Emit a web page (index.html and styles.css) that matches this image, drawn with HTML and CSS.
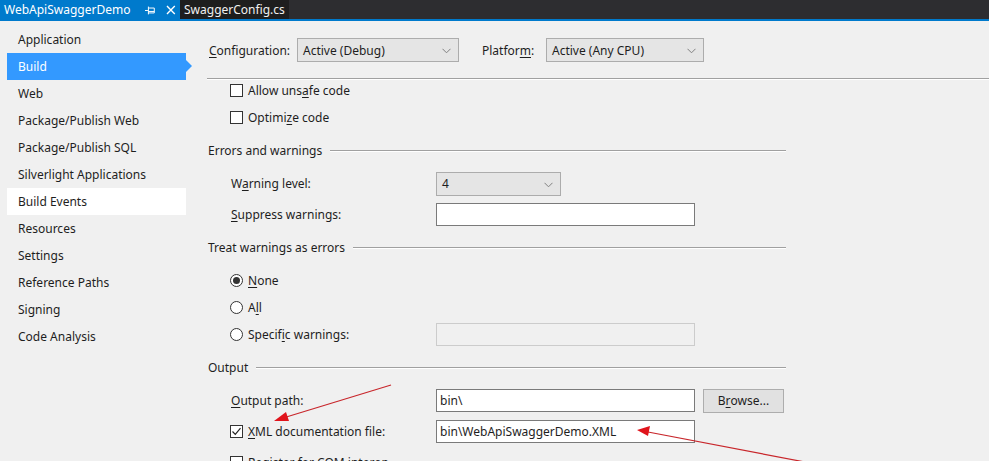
FILE: index.html
```html
<!DOCTYPE html>
<html>
<head>
  <title>WebApiSwaggerDemo - Build</title>
  <meta charset="utf-8">
  <link rel="stylesheet" href="styles.css">
</head>
<body>
  <div class="tabbar">
    <div class="tab active">
      <span>WebApiSwaggerDemo</span>
      <svg class="pin" width="11" height="10" viewBox="0 0 11 10">
        <path d="M0 5.5H3M3.5 1.5V9.5M3.5 3H9.5V8H3.5M3.5 6.5H9.5" fill="none" stroke="#fff" stroke-width="1"/>
      </svg>
      <svg class="close" width="10" height="10" viewBox="0 0 10 10">
        <path d="M1 1L9 9M9 1L1 9" stroke="#fff" stroke-width="1.4"/>
      </svg>
    </div>
    <div class="tab">SwaggerConfig.cs</div>
  </div>

  <div class="main">
    <ul class="nav">
      <li>Application</li>
      <li class="selected">Build</li>
      <li>Web</li>
      <li>Package/Publish Web</li>
      <li>Package/Publish SQL</li>
      <li>Silverlight Applications</li>
      <li class="hover">Build Events</li>
      <li>Resources</li>
      <li>Settings</li>
      <li>Reference Paths</li>
      <li>Signing</li>
      <li>Code Analysis</li>
    </ul>

    <div class="page">
      <div class="config-row">
        <span class="cfg-label"><u>C</u>onfiguration:</span>
        <div class="combo cfg-combo">Active (Debug)<svg class="chev" width="9" height="6" viewBox="0 0 9 6"><path d="M0.5 0.8L4.5 4.8L8.5 0.8" fill="none" stroke="#808080"/></svg></div>
        <span class="plat-label">Platfor<u>m</u>:</span>
        <div class="combo plat-combo">Active (Any CPU)<svg class="chev" width="9" height="6" viewBox="0 0 9 6"><path d="M0.5 0.8L4.5 4.8L8.5 0.8" fill="none" stroke="#808080"/></svg></div>
      </div>
      <div class="sep"></div>

      <div class="opts top">
        <div class="row"><span class="box"></span>Allow uns<u>a</u>fe code</div>
        <div class="row"><span class="box"></span>Optimi<u>z</u>e code</div>
      </div>

      <div class="group">
        <div class="group-title">Errors and warnings<span class="line"></span></div>
        <div class="opts body">
          <div class="row field">
            <span class="lbl">W<u>a</u>rning level:</span>
            <div class="combo warn-combo">4<svg class="chev" width="9" height="6" viewBox="0 0 9 6"><path d="M0.5 0.8L4.5 4.8L8.5 0.8" fill="none" stroke="#808080"/></svg></div>
          </div>
          <div class="row field">
            <span class="lbl"><u>S</u>uppress warnings:</span>
            <div class="text"></div>
          </div>
        </div>
      </div>

      <div class="group">
        <div class="group-title">Treat warnings as errors<span class="line"></span></div>
        <div class="opts body">
          <div class="row"><span class="radio on"></span><u>N</u>one</div>
          <div class="row"><span class="radio"></span>A<u>l</u>l</div>
          <div class="row">
            <span class="lbl radio-lbl"><span class="radio"></span>Specif<u>i</u>c warnings:</span>
            <div class="text disabled"></div>
          </div>
        </div>
      </div>

      <div class="group">
        <div class="group-title">Output<span class="line"></span></div>
        <div class="opts body">
          <div class="row field">
            <span class="lbl"><u>O</u>utput path:</span>
            <div class="text">bin\</div>
            <div class="button">B<u>r</u>owse...</div>
          </div>
          <div class="row field">
            <span class="lbl check-lbl">
              <span class="box checked">
                <svg width="11" height="11" viewBox="0 0 11 11"><path d="M1.5 5.5L4.3 8.3L9.5 2.2" fill="none" stroke="#222" stroke-width="1.2"/></svg>
              </span><u>X</u>ML documentation file:
            </span>
            <div class="text">bin\WebApiSwaggerDemo.XML</div>
          </div>
          <div class="row"><span class="box"></span>Register for COM interop</div>
        </div>
      </div>
    </div>
  </div>

  <!-- annotation arrows drawn over the screenshot -->
  <svg class="arrows" width="989" height="461" viewBox="0 0 989 461">
    <line x1="391" y1="385" x2="283" y2="418" stroke="#c8262b" stroke-width="1.2"/>
    <polygon points="274,421 286,412 289,421" fill="#e0141c"/>
    <line x1="810" y1="463" x2="648" y2="432" stroke="#c8262b" stroke-width="1.2"/>
    <polygon points="637,430 650,426 648,436" fill="#e0141c"/>
  </svg>
</body>
</html>
```

FILE: styles.css
```css
body {
  margin: 0;
  font-family: "Noto Sans", "Noto Sans CJK SC", sans-serif;
  font-size: 12px;
  color: #1e1e1e;
  background-color: #f0f0f0;
  width: 989px;
  height: 461px;
  overflow: hidden;
  position: relative;
}

u {
  text-decoration: underline;
  text-underline-offset: 2px;
}

/* tabs at the top */
.tabbar {
  display: flex;
  height: 19px;
  background-color: #2d2d30;
  border-bottom: 2px solid #007acc;
}

.tab {
  display: flex;
  align-items: center;
  padding: 0 4px;
  font-size: 12px;
  color: #f1f1f1;
  background-color: #1e1e1e;
}

.tab.active {
  width: 172px;
  color: #fff;
  background-color: #007acc;
}

.tab .pin {
  margin-left: 15px;
}

.tab .close {
  margin-left: 10px;
}

.main {
  display: flex;
}

/* left navigation */
.nav {
  list-style: none;
  margin: 0;
  padding: 5px 0 0 7px;
  width: 179px;
}

.nav li {
  height: 27px;
  line-height: 27px;
  padding-left: 11px;
  position: relative;
}

.nav li.selected {
  background-color: #3399ff;
  color: #fff;
}

.nav li.selected::after {
  content: "";
  position: absolute;
  right: -6px;
  top: 7px;
  border-left: 6px solid #3399ff;
  border-top: 6px solid transparent;
  border-bottom: 6px solid transparent;
}

.nav li.hover {
  background-color: #fff;
}

/* property page */
.page {
  flex: 1;
  padding-left: 21px;
}

.config-row {
  display: flex;
  align-items: center;
  margin-top: 17px;
  height: 24px;
}

.cfg-label {
  width: 90px;
  padding-left: 2px;
  box-sizing: border-box;
}

.plat-label {
  width: 64px;
  margin-left: 23px;
  box-sizing: border-box;
}

.combo {
  position: relative;
  display: flex;
  align-items: center;
  height: 24px;
  box-sizing: border-box;
  padding-left: 5px;
  background-color: #e5e5e5;
  border: 1px solid #acacac;
}

.combo .chev {
  position: absolute;
  right: 7px;
  top: 9px;
}

.cfg-combo {
  width: 162px;
}

.plat-combo {
  width: 158px;
}

.warn-combo {
  width: 125px;
}

.sep {
  margin-top: 16px;
  border-top: 1px solid #a0a0a0;
  border-bottom: 1px solid #fff;
}

.opts {
  padding-left: 23px;
}

.opts.top {
  margin-top: -3px;
}

.row {
  display: flex;
  align-items: center;
  height: 27px;
}

.row.field {
  margin-bottom: 4px;
}

.box {
  display: inline-flex;
  align-items: center;
  justify-content: center;
  width: 13px;
  height: 13px;
  box-sizing: border-box;
  border: 1px solid #333;
  background-color: #fff;
  margin-right: 5px;
}

.radio {
  display: inline-flex;
  align-items: center;
  justify-content: center;
  width: 13px;
  height: 13px;
  box-sizing: border-box;
  border: 1px solid #333;
  border-radius: 50%;
  background-color: #fff;
  margin-right: 5px;
}

.radio.on::after {
  content: "";
  width: 7px;
  height: 7px;
  border-radius: 50%;
  background-color: #333;
}

.lbl {
  width: 206px;
  padding-left: 1px;
  box-sizing: border-box;
}

.radio-lbl, .check-lbl {
  display: flex;
  align-items: center;
  padding-left: 0;
}

.text {
  display: flex;
  align-items: center;
  width: 259px;
  height: 23px;
  box-sizing: border-box;
  padding-left: 3px;
  background-color: #fff;
  border: 1px solid #7a7a7a;
}

.text.disabled {
  background-color: #f0f0f0;
  border-color: #cccccc;
}

.button {
  display: flex;
  align-items: center;
  justify-content: center;
  margin-left: 8px;
  width: 81px;
  height: 24px;
  box-sizing: border-box;
  background-color: #e1e1e1;
  border: 1px solid #adadad;
}

.group {
  width: 579px;
  margin-top: 6px;
}

.group-title {
  display: flex;
  align-items: center;
  height: 27px;
  padding-left: 1px;
}

.group-title .line {
  flex: 1;
  margin-left: 8px;
  border-top: 1px solid #a0a0a0;
  border-bottom: 1px solid #fff;
}

.group .body {
  padding-top: 6px;
}

.arrows {
  position: absolute;
  left: 0;
  top: 0;
  pointer-events: none;
}
```
